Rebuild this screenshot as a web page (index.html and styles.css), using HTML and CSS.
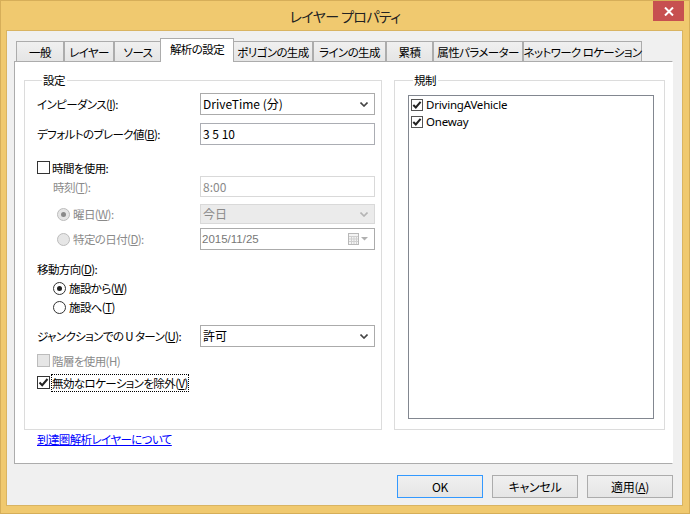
FILE: index.html
```html
<!DOCTYPE html>
<html lang="ja">
<head>
<meta charset="utf-8">
<title>レイヤー プロパティ</title>
<link rel="stylesheet" href="styles.css">
</head>
<body>
<div class="window">
  <div class="titlebar">
    <div class="title">レイヤー プロパティ</div>
    <div class="close">
      <svg width="10" height="9" viewBox="0 0 10 9"><path d="M1 0.5 L9 8.5 M9 0.5 L1 8.5" stroke="#fff" stroke-width="2" fill="none"/></svg>
    </div>
  </div>
  <div class="client">
    <div class="tabs">
      <div class="tab">一般</div>
      <div class="tab">レイヤー</div>
      <div class="tab">ソース</div>
      <div class="tab active">解析の設定</div>
      <div class="tab">ポリゴンの生成</div>
      <div class="tab">ラインの生成</div>
      <div class="tab">累積</div>
      <div class="tab">属性パラメーター</div>
      <div class="tab">ネットワーク ロケーション</div>
    </div>
    <div class="panel">
      <div class="groups">
        <fieldset class="group settings">
          <legend>設定</legend>
          <div class="row row-impedance">
            <span class="label">インピーダンス(<u>I</u>):</span>
            <div class="combo"><span>DriveTime (分)</span><svg class="chev" width="8" height="5" viewBox="0 0 8 5"><path d="M0.5 0.5 L4 4 L7.5 0.5" stroke="#444" stroke-width="1.6" fill="none"/></svg></div>
          </div>
          <div class="row row-break">
            <span class="label">デフォルトのブレーク値(<u>B</u>):</span>
            <div class="textbox">3 5 10</div>
          </div>
          <div class="checkrow row-usetime">
            <span class="check"></span><span>時間を使用:</span>
          </div>
          <div class="row row-time disabled">
            <span class="label sub">時刻(<u>T</u>):</span>
            <div class="textbox off small">8:00</div>
          </div>
          <div class="row row-day disabled">
            <span class="label radiolabel"><span class="radio off on"></span>曜日(<u>W</u>):</span>
            <div class="combo off tight"><span>今日</span><svg class="chev" width="8" height="5" viewBox="0 0 8 5"><path d="M0.5 0.5 L4 4 L7.5 0.5" stroke="#b4b4b4" stroke-width="1.6" fill="none"/></svg></div>
          </div>
          <div class="row row-date disabled">
            <span class="label radiolabel"><span class="radio off"></span>特定の日付(<u>D</u>):</span>
            <div class="textbox datebox"><span>2015/11/25</span>
              <svg class="cal" width="22" height="12" viewBox="0 0 22 12"><rect x="0.5" y="0.5" width="10" height="11" fill="#f4f4f4" stroke="#b8b8b8"/><path d="M1 3.5 H10 M1 6 H10 M1 8.5 H10 M3.5 3 V11 M6 3 V11 M8.5 3 V11" stroke="#cfcfcf" stroke-width="1"/><path d="M13 4 L20 4 L16.5 7.5 Z" fill="#b0b0b0"/></svg>
            </div>
          </div>
          <div class="textrow row-direction">移動方向(<u>D</u>):</div>
          <div class="checkrow row-from">
            <span class="radio on"></span><span>施設から(<u>W</u>)</span>
          </div>
          <div class="checkrow row-to">
            <span class="radio"></span><span>施設へ(<u>T</u>)</span>
          </div>
          <div class="row row-uturn">
            <span class="label">ジャンクションでの U ターン(<u>U</u>):</span>
            <div class="combo"><span>許可</span><svg class="chev" width="8" height="5" viewBox="0 0 8 5"><path d="M0.5 0.5 L4 4 L7.5 0.5" stroke="#444" stroke-width="1.6" fill="none"/></svg></div>
          </div>
          <div class="checkrow row-hier disabled">
            <span class="check off"></span><span>階層を使用(H)</span>
          </div>
          <div class="checkrow row-invalid">
            <span class="check"><svg width="11" height="11" viewBox="0 0 11 11"><path d="M1.5 5.5 L4.2 8.2 L9.5 2" stroke="#222" stroke-width="2" fill="none"/></svg></span><span class="focus">無効なロケーションを除外(<u>V</u>)</span>
          </div>
        </fieldset>
        <fieldset class="group restrict">
          <legend>規制</legend>
          <div class="listbox">
            <div class="item"><span class="check small"><svg width="10" height="10" viewBox="0 0 10 10"><path d="M1.3 5 L3.8 7.5 L8.6 1.8" stroke="#222" stroke-width="2" fill="none"/></svg></span><span>DrivingAVehicle</span></div>
            <div class="item"><span class="check small"><svg width="10" height="10" viewBox="0 0 10 10"><path d="M1.3 5 L3.8 7.5 L8.6 1.8" stroke="#222" stroke-width="2" fill="none"/></svg></span><span>Oneway</span></div>
          </div>
        </fieldset>
      </div>
      <a class="link" href="#">到達圏解析レイヤーについて</a>
    </div>
    <div class="buttons">
      <button class="btn default">OK</button>
      <button class="btn">キャンセル</button>
      <button class="btn">適用(<u>A</u>)</button>
    </div>
  </div>
</div>
</body>
</html>
```
FILE: styles.css
```css
* { box-sizing: border-box; }
html, body { margin: 0; padding: 0; }
body {
  width: 690px;
  height: 514px;
  overflow: hidden;
  font-family: "Noto Sans CJK JP", "Noto Sans", sans-serif;
  font-size: 11.5px;
  letter-spacing: -0.6px;
  color: #000;
  font-feature-settings: "palt";
}
u { text-underline-offset: 1px; }

.window {
  width: 690px;
  height: 514px;
  background: #F0C96F;
  border: 1px solid #D6AE59;
  display: flex;
  flex-direction: column;
}

.titlebar {
  height: 29px;
  display: grid;
  grid-template-columns: 1fr auto 1fr;
  align-items: start;
}
.title {
  grid-column: 2;
  font-size: 14px;
  letter-spacing: -0.6px;
  line-height: 31px;
  color: #222;
}
.close {
  grid-column: 3;
  justify-self: end;
  width: 31px;
  height: 20px;
  margin-right: 5px;
  background: #C75050;
  display: flex;
  align-items: center;
  justify-content: center;
}

.client {
  flex: 1;
  margin: 0 6px 7px 5px;
  border: 1px solid #D9B462;
  background: #F0F0F0;
  padding: 10px 9px 0 7px;
  display: flex;
  flex-direction: column;
}

/* tabs */
.tabs {
  display: flex;
  height: 20px;
  padding-left: 2px;
}
.tab {
  height: 20px;
  border: 1px solid #ACACAC;
  border-bottom: none;
  background: linear-gradient(#F0F0F0, #E5E5E5);
  display: flex;
  align-items: center;
  justify-content: center;
  white-space: nowrap;
  line-height: 16px;
  padding-top: 1px;
}
.tab:nth-child(1) { width: 48px; }
.tab:nth-child(2) { width: 50px; }
.tab:nth-child(3) { width: 48px; }
.tab:nth-child(4) { width: 74px; }
.tab:nth-child(5) { width: 80px; }
.tab:nth-child(6) { width: 73px; }
.tab:nth-child(7) { width: 47px; }
.tab:nth-child(8) { width: 90px; }
.tab:nth-child(9) { width: 119px; }
.tab.active {
  position: relative;
  z-index: 1;
  height: 24px;
  margin: -3px -1px -1px -2px;
  background: #fff;
  padding-top: 0;
  padding-bottom: 3px;
}

/* panel */
.panel {
  height: 403px;
  background: #fff;
  border: 1px solid #ACACAC;
  border-right-color: #fff;
  padding: 10px 7px 0 9px;
  display: flex;
  flex-direction: column;
}
.groups {
  display: flex;
  gap: 12px;
  height: 358px;
}
.group {
  margin: 0;
  padding: 0;
  min-width: 0;
  border: 1px solid #DCDCDC;
}
.group legend {
  margin-left: 5px;
  padding: 0 2px 0 1px;
  line-height: 16px;
  height: 16px;
}
.settings { width: 358px; padding: 0 6px 0 12px; }
.restrict { flex: 1; padding: 0 10px 0 13px; }

.row {
  display: flex;
  align-items: center;
}
.label {
  width: 163px;
  white-space: nowrap;
  line-height: 16px;
}
.label.sub { padding-left: 16px; }
.radiolabel { display: flex; align-items: center; padding-left: 20px; }
.radiolabel .radio { margin-right: 3px; }

.combo, .textbox {
  width: 175px;
  height: 22px;
  border: 1px solid #ABABAB;
  background: #fff;
  padding: 0 6px 0 2px;
  display: flex;
  align-items: center;
  justify-content: space-between;
  line-height: 16px;
  white-space: pre;
  font-size: 12px;
  letter-spacing: 0;
}
.textbox { border-color: #ABADB3; }
.combo.off { background: #EBEBEB; border-color: #D9D9D9; color: #8a8a8a; }
.textbox.off { border-color: #D9D9D9; color: #8a8a8a; }
.small { height: 21px; }
.tight { height: 20px; }
.datebox { color: #777; border-color: #ABABAB; padding-right: 4px; padding-left: 1px; font-family: "Liberation Sans", "Noto Sans CJK JP", sans-serif; }
.datebox span { font-size: 11.5px; }
.disabled { color: #8a8a8a; }

.checkrow {
  display: flex;
  align-items: center;
  line-height: 16px;
  white-space: nowrap;
}
.check {
  width: 13px;
  height: 13px;
  border: 1px solid #333;
  background: #fff;
  margin-right: 2px;
  display: flex;
  align-items: center;
  justify-content: center;
  flex: none;
}
.check.off { border-color: #BCBCBC; background: #E6E6E6; }
.check.small { width: 12px; height: 12px; border-color: #555; margin-right: 3px; }
.radio {
  width: 13px;
  height: 13px;
  border-radius: 50%;
  border: 1px solid #333;
  background: #fff;
  flex: none;
  display: flex;
  align-items: center;
  justify-content: center;
}
.radio.on::after {
  content: "";
  width: 5px;
  height: 5px;
  border-radius: 50%;
  background: #222;
}
.radio.off { border-color: #BCBCBC; background: #E6E6E6; }
.radio.off.on::after { background: #8a8a8a; }
.focus { outline: 1px dotted #000; outline-offset: 0; }

.textrow { line-height: 16px; }

/* vertical rhythm of the settings group */
.row-impedance { margin-top: 5px; }
.row-break { margin-top: 8px; }
.row-usetime { margin-top: 16px; height: 13px; }
.row-time { margin-top: 2px; }
.row-day { margin-top: 7px; }
.row-date { margin-top: 4px; }
.row-direction { margin-top: 11px; }
.row-from { margin-top: 3px; height: 16px; padding-left: 16px; }
.row-to { margin-top: 3px; height: 16px; padding-left: 16px; }
.row-from .radio, .row-to .radio { margin-right: 3px; }
.row-uturn { margin-top: 10px; }
.row-hier { margin-top: 7px; height: 13px; }
.row-invalid { margin-top: 9px; height: 13px; }

/* restrictions list */
.listbox {
  margin-top: 7px;
  height: 324px;
  border: 1px solid #828790;
  background: #fff;
  padding: 0 0 0 2px;
}
.item {
  height: 17px;
  display: flex;
  align-items: center;
  font-family: "Noto Sans", sans-serif;
  font-size: 11.5px;
  letter-spacing: -0.2px;
}

.link {
  margin: 1px 0 0 13px;
  line-height: 16px;
  color: #0000FF;
  text-decoration: underline;
  align-self: flex-start;
}

/* buttons */
.buttons {
  display: flex;
  justify-content: flex-end;
  gap: 9px;
  margin-top: 11px;
}
.btn {
  width: 86px;
  height: 23px;
  border: 1px solid #ACACAC;
  background: linear-gradient(#F0F0F0, #E5E5E5);
  font-family: "Noto Sans CJK JP", "Noto Sans", sans-serif;
  font-size: 12px;
  letter-spacing: -0.3px;
  font-feature-settings: "palt";
  color: #000;
  padding: 0;
  line-height: 16px;
}
.btn.default { border-color: #3399FF; }
```
